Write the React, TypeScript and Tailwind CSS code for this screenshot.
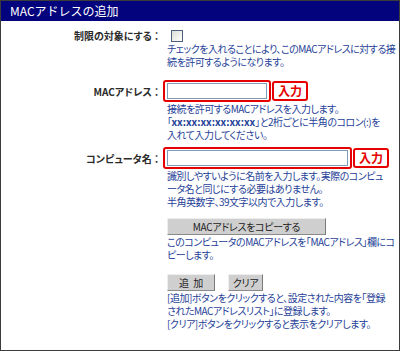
import React from 'react';

const font = "font-['Noto_Sans_CJK_JP','Liberation_Sans',sans-serif]";

function Label({ text }: { text: string }): JSX.Element {
  return (
    <div className="w-[162px] shrink-0 pr-[4px] text-right text-[10px] font-bold text-[#2a2a2a] [font-feature-settings:'palt'] whitespace-nowrap">
      {text}
    </div>
  );
}

function Note({ lines }: { lines: React.ReactNode[] }): JSX.Element {
  return (
    <div className="pl-[166px] text-[10px] leading-[13px] tracking-[-0.5px] text-[#1f3f98] [font-feature-settings:'palt'] whitespace-nowrap">
      {lines.map((line, i) => (
        <div key={i}>{line}</div>
      ))}
    </div>
  );
}

function InputTag(): JSX.Element {
  return (
    <div className="ml-[1px] flex h-[20px] w-[36px] items-center justify-center rounded-[3px] border-2 border-[#e60000] bg-white text-[12px] font-bold text-[#e60000]">
      入力
    </div>
  );
}

function Button({ label, width }: { label: string; width: string }): JSX.Element {
  return (
    <div
      className={`${width} flex h-[17px] items-center justify-center border border-t-[#eeeeee] border-l-[#eeeeee] border-r-[#7a7a7a] border-b-[#8a8a8a] bg-[#cfcfcf] text-[10px] tracking-[-0.3px] text-[#222222] [font-feature-settings:'palt'] whitespace-nowrap`}
    >
      {label}
    </div>
  );
}

function App(): JSX.Element {
  return (
    <div className={`${font} h-[351px] w-[400px] overflow-hidden border border-[#3c3c3c] bg-white`}>
      <div className="flex h-[20px] items-center bg-[#03037e] pl-[9px] text-[12px] text-white">
        MACアドレスの追加
      </div>

      {/* 制限の対象 */}
      <div className="mt-[8px] flex h-[13px] items-center">
        <Label text="制限の対象にする ：" />
        <div className="ml-[8px] h-[12px] w-[12px] border border-[#4d607e] bg-gradient-to-br from-[#dcdcd6] to-white" />
      </div>
      <Note
        lines={[
          'チェックを入れることにより、このMACアドレスに対する接',
          '続を許可するようになります。',
        ]}
      />

      {/* MACアドレス */}
      <div className="mt-[12px] flex h-[22px] items-center">
        <Label text="MACアドレス ：" />
        <div className="flex h-[22px] w-[108px] items-center rounded-[3px] border-2 border-[#e60000] px-[2px]">
          <div className="h-[16px] w-full border border-[#7f9db9] bg-white" />
        </div>
        <InputTag />
      </div>
      <Note
        lines={[
          '接続を許可するMACアドレスを入力します。',
          <>
            「<span className="font-bold tracking-[0px]">xx:xx:xx:xx:xx:xx</span>
            」と2桁ごとに半角のコロン(:)を
          </>,
          '入れて入力してください。',
        ]}
      />

      {/* コンピュータ名 */}
      <div className="mt-[6px] flex h-[22px] items-center">
        <Label text="コンピュータ名 ：" />
        <div className="flex h-[22px] w-[189px] items-center rounded-[3px] border-2 border-[#e60000] px-[2px]">
          <div className="h-[16px] w-full border border-[#7f9db9] bg-white" />
        </div>
        <InputTag />
      </div>
      <Note
        lines={[
          '識別しやすいように名前を入力します。実際のコンピュ',
          'ータ名と同じにする必要はありません。',
          '半角英数字、39文字以内で入力します。',
        ]}
      />

      {/* コピー */}
      <div className="mt-[10px] pl-[166px]">
        <Button label="MACアドレスをコピーする" width="w-[159px]" />
      </div>
      <Note
        lines={[
          'このコンピュータのMACアドレスを「MACアドレス」欄にコ',
          'ピーします。',
        ]}
      />

      {/* 追加 / クリア */}
      <div className="mt-[13px] flex gap-[13px] pl-[166px]">
        <Button label={'追\u2002加'} width="w-[48px]" />
        <Button label="クリア" width="w-[35px]" />
      </div>
      <Note
        lines={[
          '[追加]ボタンをクリックすると、設定された内容を「登録',
          'されたMACアドレスリスト」に登録します。',
          '[クリア]ボタンをクリックすると表示をクリアします。',
        ]}
      />
    </div>
  );
}

export default App;
